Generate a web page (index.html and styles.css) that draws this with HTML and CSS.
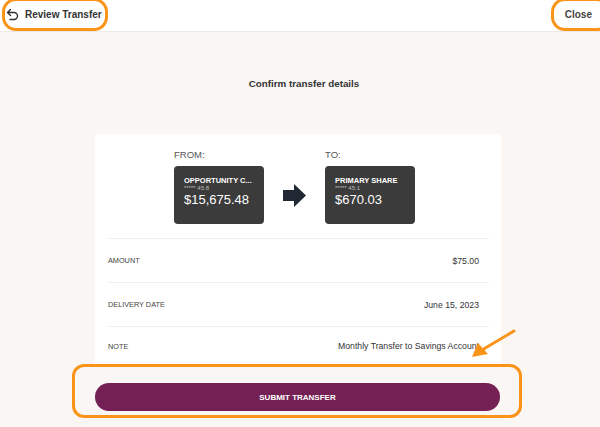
FILE: index.html
```html
<!DOCTYPE html>
<html>
<head>
<meta charset="utf-8">
<link rel="stylesheet" href="styles.css">
</head>
<body>
<div class="page">
  <header class="topbar">
    <div class="back">
      <svg class="back-icon" width="13" height="13" viewBox="0 0 13 13"><path d="M4.5 1.5 L1.5 4.5 L4.5 7.5 M1.5 4.5 H8 A3.5 3.5 0 0 1 8 11.5 H4" fill="none" stroke="#333" stroke-width="1.4" stroke-linecap="round" stroke-linejoin="round"/></svg>
      <span class="title">Review Transfer</span>
    </div>
    <span class="close">Close</span>
  </header>

  <main class="content">
    <h1 class="heading">Confirm transfer details</h1>
    <section class="card">
      <div class="accounts">
        <div class="acct">
          <div class="acct-label">FROM:</div>
          <div class="tile">
            <div class="tile-name">OPPORTUNITY C...</div>
            <div class="tile-num">***** 45:8</div>
            <div class="tile-bal">$15,675.48</div>
          </div>
        </div>
        <svg class="arrow" width="23" height="23" viewBox="0 0 23 23"><path d="M0 6 H11 V0 L23 11.5 L11 23 V17 H0 Z" fill="#1f2833"/></svg>
        <div class="acct">
          <div class="acct-label">TO:</div>
          <div class="tile">
            <div class="tile-name">PRIMARY SHARE</div>
            <div class="tile-num">***** 45:1</div>
            <div class="tile-bal">$670.03</div>
          </div>
        </div>
      </div>
      <div class="row"><span class="label">AMOUNT</span><span class="value">$75.00</span></div>
      <div class="row"><span class="label">DELIVERY DATE</span><span class="value">June 15, 2023</span></div>
      <div class="row last"><span class="label">NOTE</span><span class="value">Monthly Transfer to Savings Account</span></div>
    </section>
    <button class="submit">SUBMIT TRANSFER</button>
  </main>

  <div class="mark mark-back"></div>
  <div class="mark mark-close"></div>
  <div class="mark mark-submit"></div>
  <svg class="mark-arrow" width="50" height="35" viewBox="0 0 50 35"><path d="M46 3 L14 22" stroke="#fa9419" stroke-width="3" stroke-linecap="round"/><path d="M4 29 L10 15 L20 26 Z" fill="#fa9419"/></svg>
</div>
</body>
</html>
```

FILE: styles.css
```css
* { box-sizing: border-box; }
html, body { margin: 0; padding: 0; }
body {
  width: 600px;
  height: 427px;
  overflow: hidden;
  background: #f9f6f3;
  font-family: "Liberation Sans", Arial, sans-serif;
  color: #333;
}
.page { position: relative; width: 600px; height: 427px; }
.topbar {
  height: 32px;
  background: #fff;
  border-bottom: 1px solid #ece8e5;
  display: flex;
  align-items: center;
  justify-content: space-between;
  padding: 0 8px 2px 6px;
}
.back { display: flex; align-items: center; gap: 6px; }
.back-icon { display: block; }
.title {
  font-weight: 700;
  font-size: 10px;
  color: #333;
}
.close {
  font-weight: 700;
  font-size: 10px;
  color: #444;
}
.content {
  display: flex;
  flex-direction: column;
  align-items: center;
}
.heading {
  margin: 46px 0 0 8px;
  font-size: 9.8px;
  font-weight: 700;
  color: #333;
  height: 12px;
  line-height: 12px;
}
.card {
  margin-top: 44px;
  width: 406px;
  margin-left: -4px;
  background: #fff;
  padding: 0 22px 0 13px;
}
.accounts {
  display: flex;
  justify-content: center;
  align-items: flex-end;
  gap: 19px;
  padding: 15px 8px 14px 0;
  border-bottom: 1px solid #f0eeec;
  margin-right: -10px;
}
.acct-label {
  font-size: 9.5px;
  color: #555;
  line-height: 11px;
  margin-bottom: 6px;
}
.tile {
  width: 90px;
  height: 58px;
  background: #3b3b3b;
  border-radius: 4px;
  padding: 10px 10px 0;
  color: #fff;
}
.tile-name { font-size: 7.5px; font-weight: 700; line-height: 9px; }
.tile-num { font-size: 6px; color: #bdbdbd; line-height: 7px; }
.tile-bal { font-size: 13px; line-height: 15px; }
.arrow { display: block; margin-bottom: 17px; }
.row {
  height: 44px;
  display: flex;
  align-items: center;
  justify-content: space-between;
  border-bottom: 1px solid #f0eeec;
  margin-right: -10px;
  padding-right: 10px;
}
.row.last { border-bottom: none; height: 38px; }
.label { font-size: 7.3px; color: #444; }
.value { font-size: 8.7px; color: #333; }
.submit {
  margin-top: 18px;
  width: 405px;
  height: 28px;
  border: none;
  border-radius: 14px;
  background: #752055;
  color: #fff;
  font-family: "Liberation Sans", Arial, sans-serif;
  font-weight: 700;
  font-size: 8px;
  margin-left: -5px;
}
.mark {
  position: absolute;
  border: 3.5px solid #fa9419;
  border-radius: 14px;
}
.mark-back { left: 2px; top: -2px; width: 106px; height: 33px; }
.mark-close { left: 551px; top: -2px; width: 60px; height: 33px; }
.mark-submit { left: 72px; top: 364px; width: 450px; height: 54px; border-radius: 12px; }
.mark-arrow { position: absolute; left: 468px; top: 328px; }
```
